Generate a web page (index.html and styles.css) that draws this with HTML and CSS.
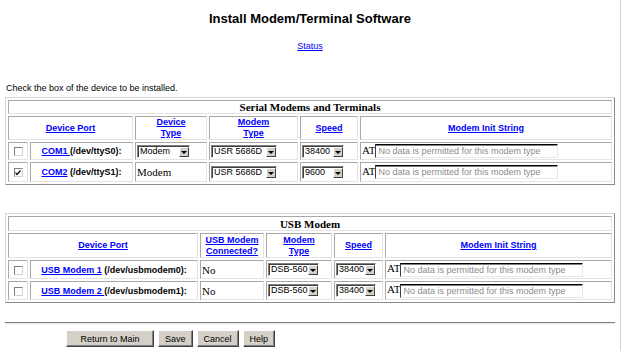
FILE: index.html
```html
<!DOCTYPE html>
<html lang="en">
<head>
    <meta charset="utf-8" />
    <title>Install Modem/Terminal Software</title>
    <link rel="stylesheet" href="styles.css">
</head>
<body>
    <h1 class="title">Install Modem/Terminal Software</h1>
    <p class="status"><a href="#">Status</a></p>
    <p class="intro">Check the box of the device to be installed.</p>

    <table class="grid serial">
        <colgroup>
            <col class="w-chk"><col class="w-port"><col class="w-dtype">
            <col class="w-mtype"><col class="w-speed"><col>
        </colgroup>
        <tr class="row-cap"><th colspan="6" class="cap">Serial Modems and Terminals</th></tr>
        <tr class="row-head">
            <th colspan="2"><a href="#">Device Port</a></th>
            <th><a href="#">Device<br>Type</a></th>
            <th><a href="#">Modem<br>Type</a></th>
            <th><a href="#">Speed</a></th>
            <th><a href="#">Modem Init String</a></th>
        </tr>
        <tr class="row-a">
            <td class="chk"><span class="cb"></span></td>
            <td class="port"><a href="#">COM1 </a>(/dev/ttyS0):</td>
            <td class="fld"><span class="sel w53"><span>Modem</span><span class="arr"></span></span></td>
            <td class="fld"><span class="sel w66"><span>USR 5686D</span><span class="arr"></span></span></td>
            <td class="fld"><span class="sel w42"><span>38400</span><span class="arr"></span></span></td>
            <td class="init">AT<input class="txt" type="text" readonly placeholder="No data is permitted for this modem type"></td>
        </tr>
        <tr class="row-b">
            <td class="chk"><span class="cb on"><svg width="6" height="6" viewBox="0 0 6 6"><path d="M0.5 2.5 L2 4.5 L5.5 0.5" fill="none" stroke="#000" stroke-width="1.2"/></svg></span></td>
            <td class="port"><a href="#">COM2</a> (/dev/ttyS1):</td>
            <td class="fld plain">Modem</td>
            <td class="fld"><span class="sel w66"><span>USR 5686D</span><span class="arr"></span></span></td>
            <td class="fld"><span class="sel w42"><span>9600</span><span class="arr"></span></span></td>
            <td class="init">AT<input class="txt" type="text" readonly placeholder="No data is permitted for this modem type"></td>
        </tr>
    </table>

    <table class="grid usb">
        <colgroup>
            <col class="w-chk"><col class="w-uport"><col class="w-conn">
            <col class="w-umtype"><col class="w-uspeed"><col>
        </colgroup>
        <tr class="row-cap"><th colspan="6" class="cap">USB Modem</th></tr>
        <tr class="row-head">
            <th colspan="2"><a href="#">Device Port</a></th>
            <th><a href="#">USB Modem<br>Connected?</a></th>
            <th><a href="#">Modem<br>Type</a></th>
            <th><a href="#">Speed</a></th>
            <th><a href="#">Modem Init String</a></th>
        </tr>
        <tr class="row-a">
            <td class="chk"><span class="cb"></span></td>
            <td class="port"><a href="#">USB Modem 1</a> (/dev/usbmodem0):</td>
            <td class="fld plain">No</td>
            <td class="fld"><span class="sel w51"><span>DSB-560</span><span class="arr"></span></span></td>
            <td class="fld"><span class="sel w40"><span>38400</span><span class="arr"></span></span></td>
            <td class="init">AT<input class="txt" type="text" readonly placeholder="No data is permitted for this modem type"></td>
        </tr>
        <tr class="row-a">
            <td class="chk"><span class="cb"></span></td>
            <td class="port"><a href="#">USB Modem 2 </a>(/dev/usbmodem1):</td>
            <td class="fld plain">No</td>
            <td class="fld"><span class="sel w51"><span>DSB-560</span><span class="arr"></span></span></td>
            <td class="fld"><span class="sel w40"><span>38400</span><span class="arr"></span></span></td>
            <td class="init">AT<input class="txt" type="text" readonly placeholder="No data is permitted for this modem type"></td>
        </tr>
    </table>

    <hr class="rule">

    <div class="actions">
        <button class="btn btn-main">Return to Main</button>
        <button class="btn">Save</button>
        <button class="btn">Cancel</button>
        <button class="btn">Help</button>
    </div>
</body>
</html>
```

FILE: styles.css
```css
body {
    margin: 0;
    min-height: 351px;
    box-sizing: border-box;
    border-right: 1px solid #d4d4d4;
    background-color: #ffffff;
    font-family: "Liberation Sans", Arial, sans-serif;
    font-size: 9px;
    color: #000000;
}

a {
    color: #0000ff;
    text-decoration: underline;
}

.title {
    margin: 11px 0 0;
    font-size: 13px;
    line-height: 16px;
    text-align: center;
}

.status {
    margin: 13px 0 0;
    line-height: 12px;
    text-align: center;
}

.intro {
    margin: 30px 0 0 6px;
    line-height: 12px;
}

.grid {
    margin: 3px 0 0 5px;
    width: 610px;
    table-layout: fixed;
    border-collapse: separate;
    border-spacing: 2px;
    border: 1px solid;
    border-color: #d8d8d8 #8c8c8c #8c8c8c #d8d8d8;
}

.usb {
    margin-top: 28px;
}

.grid th,
.grid td {
    padding: 0 1px;
    border: 1px solid;
    border-color: #a8a8a8 #e4e4e4 #e4e4e4 #a8a8a8;
    vertical-align: middle;
}

.w-chk { width: 20px; }
.w-port { width: 103px; }
.w-dtype { width: 72px; }
.w-mtype { width: 89px; }
.w-speed { width: 58px; }
.w-uport { width: 168px; }
.w-conn { width: 64px; }
.w-umtype { width: 66px; }
.w-uspeed { width: 49px; }

.cap {
    font-family: "Liberation Serif", "Times New Roman", serif;
    font-size: 11px;
    font-weight: bold;
    line-height: 12px;
    text-align: center;
}

.serial .cap { height: 12px; }
.usb .cap { height: 13px; }

.row-head th {
    font-size: 9px;
    font-weight: bold;
    line-height: 11px;
    text-align: center;
}

.serial .row-head th { height: 22px; }
.usb .row-head th { height: 23px; }

.serial .row-a td { height: 16px; }
.serial .row-b td { height: 18px; }
.usb .row-a td { height: 17px; }

.chk {
    text-align: center;
}

.cb {
    display: inline-flex;
    align-items: center;
    justify-content: center;
    width: 7px;
    height: 7px;
    border: 1px solid;
    border-color: #808080 #d4d4d4 #d4d4d4 #808080;
    background-color: #ffffff;
    vertical-align: middle;
}

.port {
    font-weight: bold;
    text-align: center;
    white-space: nowrap;
}

.fld {
    padding-left: 2px;
    white-space: nowrap;
}

.plain {
    font-family: "Liberation Serif", "Times New Roman", serif;
    font-size: 11px;
    padding-left: 1px;
}

.sel {
    display: inline-flex;
    justify-content: space-between;
    align-items: center;
    box-sizing: border-box;
    height: 13px;
    padding-left: 2px;
    border: 1px solid;
    border-color: #808080 #ffffff #ffffff #808080;
    box-shadow: inset 1px 1px 0 #404040;
    background-color: #ffffff;
    font-size: 9px;
    line-height: 11px;
    vertical-align: middle;
}

.arr {
    position: relative;
    box-sizing: border-box;
    width: 10px;
    height: 10px;
    margin-top: 1px;
    border: 1px solid;
    border-color: #ffffff #404040 #404040 #ffffff;
    background-color: #d4d0c8;
}

.arr::after {
    content: "";
    position: absolute;
    left: 1px;
    top: 3px;
    border-left: 3px solid transparent;
    border-right: 3px solid transparent;
    border-top: 3px solid #000000;
}

.w53 { width: 53px; }
.w66 { width: 66px; }
.w42 { width: 42px; }
.w51 { width: 51px; }
.w40 { width: 40px; }

.init {
    font-family: "Liberation Serif", "Times New Roman", serif;
    font-size: 11px;
    padding-left: 1px;
    white-space: nowrap;
}

.txt {
    box-sizing: border-box;
    width: 183px;
    height: 14px;
    margin: 0;
    padding: 0 2px;
    border: 1px solid;
    border-color: #000000 #e8e8e8 #e8e8e8 #404040;
    box-shadow: inset 0 1px 0 #808080;
    background-color: #ffffff;
    font-family: "Liberation Sans", Arial, sans-serif;
    font-size: 9px;
    vertical-align: middle;
    outline: none;
}

.txt::placeholder {
    color: #8c8c8c;
}

.rule {
    margin: 19px 0 0 5px;
    width: 610px;
    height: 0;
    border: none;
    border-top: 1px solid #808080;
    border-bottom: 1px solid #e8e8e8;
}

.actions {
    display: flex;
    gap: 4px;
    margin: 6px 0 0 66px;
}

.btn {
    box-sizing: border-box;
    height: 17px;
    padding: 0 6px;
    border: 1px solid;
    border-color: #ffffff #404040 #404040 #ffffff;
    box-shadow: inset -1px -1px 0 #808080;
    background-color: #d4d0c8;
    font-family: "Liberation Sans", Arial, sans-serif;
    font-size: 9px;
    color: #000000;
}

.btn-main {
    width: 88px;
}
```
